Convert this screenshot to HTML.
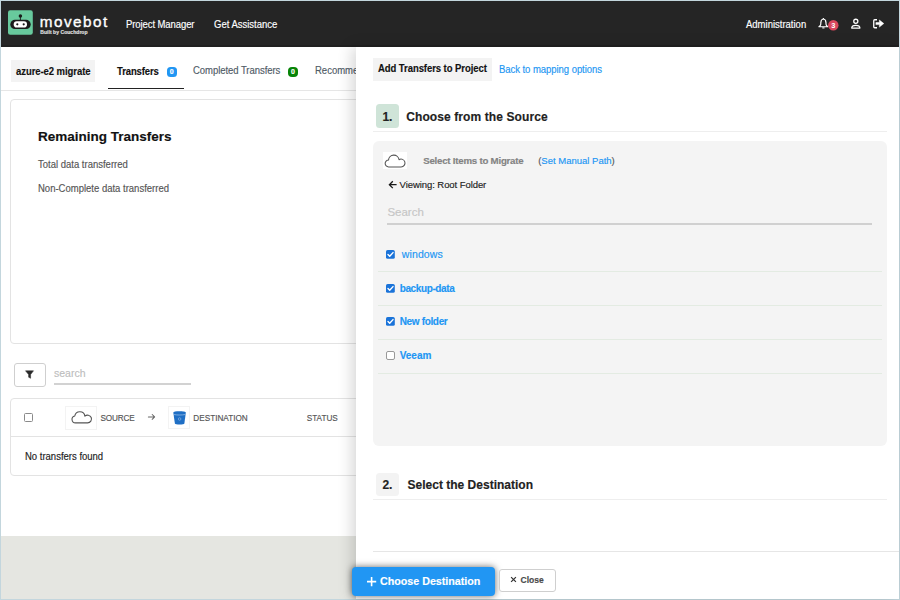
<!DOCTYPE html>
<html><head><meta charset="utf-8"><title>movebot</title>
<style>
html,body{margin:0;padding:0;}
body{width:900px;height:600px;position:relative;overflow:hidden;background:#c3d6dd;font-family:"Liberation Sans",sans-serif;}
.t{position:absolute;line-height:1;white-space:nowrap;-webkit-text-stroke:0.15px currentColor;}
.r{position:absolute;}
</style></head><body>
<div class="r" style="left:1.00px;top:47.00px;width:898.00px;height:552.00px;background:#fff;"></div>
<div class="r" style="left:1.00px;top:536.20px;width:355.00px;height:62.80px;background:#e5e6e1;"></div>
<div class="r" style="left:1.00px;top:1.00px;width:898.00px;height:45.70px;background:#252525;"></div>
<div class="r" style="left:1.00px;top:45.00px;width:898.00px;height:1.70px;background:#202020;"></div>
<svg class="r" style="left:0;top:0" width="40" height="40" viewBox="0 0 40 40">
<rect x="8" y="10.2" width="24.8" height="24.6" rx="2.2" fill="#68c99d"/>
<line x1="20.4" y1="16" x2="20.4" y2="21" stroke="#1b1b1b" stroke-width="0.9"/>
<circle cx="20.4" cy="16" r="1.75" fill="#1b1b1b"/>
<rect x="10.3" y="19.8" width="20.4" height="9.2" rx="4.6" fill="#1b1b1b"/>
<rect x="13.7" y="21.3" width="13.3" height="6.2" rx="3.1" fill="#fff"/>
<circle cx="17.3" cy="24.3" r="1.1" fill="#1b1b1b"/>
<circle cx="23.7" cy="24.3" r="1.1" fill="#1b1b1b"/>
</svg>
<div class="t" style="left:39.80px;top:13.95px;font-size:15.30px;color:#fff;letter-spacing:1.45px;-webkit-text-stroke:0.35px #fff;">movebot</div>
<div class="t" style="left:40.30px;top:29.87px;font-size:5.00px;color:#e0e0e0;font-weight:bold;letter-spacing:0.05px;">Built by Couchdrop</div>
<div class="t" style="left:126.40px;top:20.04px;font-size:10.00px;color:#fff;transform:scaleX(0.9500);transform-origin:0 0;letter-spacing:-0.09px;">Project Manager</div>
<div class="t" style="left:213.70px;top:20.04px;font-size:10.00px;color:#fff;transform:scaleX(0.9500);transform-origin:0 0;">Get Assistance</div>
<div class="t" style="left:746.20px;top:20.04px;font-size:10.00px;color:#fff;transform:scaleX(0.9500);transform-origin:0 0;">Administration</div>
<svg class="r" style="left:814px;top:14px" width="26" height="20" viewBox="0 0 26 20">
<path d="M9.4 5.0 C7.7 5.2 6.9 6.6 6.9 8.4 L6.7 10.6 C6.6 11.6 5.7 12.2 4.9 12.7 L13.9 12.7 C13.1 12.2 12.2 11.6 12.1 10.6 L11.9 8.4 C11.9 6.6 11.1 5.2 9.4 5.0 Z" fill="none" stroke="#fff" stroke-width="1.15" stroke-linejoin="round"/>
<line x1="9.4" y1="4.1" x2="9.4" y2="5.0" stroke="#fff" stroke-width="1.1"/>
<path d="M8.3 13.9 L10.5 13.9" stroke="#fff" stroke-width="1.1"/>
<circle cx="19.3" cy="11.3" r="5.2" fill="#d9485e"/>
<text x="19.35" y="13.9" font-family="Liberation Sans" font-weight="bold" font-size="7.4" fill="#fff" text-anchor="middle">3</text>
</svg>
<svg class="r" style="left:848px;top:16px" width="16" height="16" viewBox="0 0 16 16">
<circle cx="7.8" cy="5.3" r="2.05" fill="none" stroke="#fff" stroke-width="1.3"/>
<path d="M3.7 12.1 C3.7 10.1 5.3 9.3 7.8 9.3 C10.3 9.3 11.9 10.1 11.9 12.1 Z" fill="none" stroke="#fff" stroke-width="1.25" stroke-linejoin="round"/>
</svg>
<svg class="r" style="left:870px;top:16px" width="18" height="16" viewBox="0 0 18 16">
<path d="M7.0 3.75 L4.7 3.75 Q3.75 3.75 3.75 4.7 L3.75 10.8 Q3.75 11.75 4.7 11.75 L7.0 11.75" fill="none" stroke="#fff" stroke-width="1.3"/>
<path d="M5.9 6.5 L9.4 6.5 L9.4 4.0 L13.8 7.55 L9.4 11.1 L9.4 8.6 L5.9 8.6 Z" fill="#fff" stroke="#fff" stroke-width="0.5" stroke-linejoin="round"/>
</svg>
<div class="r" style="left:10.60px;top:59.80px;width:84.90px;height:22.20px;background:#f3f3f3;"></div>
<div class="t" style="left:15.60px;top:66.53px;font-size:10.00px;color:#111;font-weight:bold;transform:scaleX(0.9500);transform-origin:0 0;letter-spacing:-0.07px;">azure-e2 migrate</div>
<div class="t" style="left:117.20px;top:66.63px;font-size:10.00px;color:#111;font-weight:bold;transform:scaleX(0.9500);transform-origin:0 0;letter-spacing:-0.12px;">Transfers</div>
<div class="r" style="left:166.70px;top:67.00px;width:9.90px;height:9.80px;background:#2196f3;border-radius:3.5px;"></div>
<div class="t" style="left:169.70px;top:68.37px;font-size:7.00px;color:#fff;font-weight:bold;">0</div>
<div class="r" style="left:108.30px;top:88.00px;width:76.10px;height:1.40px;background:#222;"></div>
<div class="t" style="left:193.00px;top:66.43px;font-size:10.00px;color:#4f5b66;transform:scaleX(0.9500);transform-origin:0 0;letter-spacing:-0.05px;">Completed Transfers</div>
<div class="r" style="left:287.80px;top:66.80px;width:10.20px;height:9.90px;background:#078407;border-radius:4px;"></div>
<div class="t" style="left:291.00px;top:68.27px;font-size:7.00px;color:#fff;font-weight:bold;">0</div>
<div class="t" style="left:314.60px;top:66.43px;font-size:10.00px;color:#4f5b66;transform:scaleX(0.9500);transform-origin:0 0;">Recommendations</div>
<div class="r" style="left:1.00px;top:90.00px;width:355.00px;height:1.00px;background:#e6e6e6;"></div>
<div class="r" style="left:10.00px;top:99.00px;width:390.00px;height:244.50px;border:1px solid #e3e3e3;border-radius:4px;box-sizing:border-box;"></div>
<div class="t" style="left:38.00px;top:130.27px;font-size:13.50px;color:#111;font-weight:bold;">Remaining Transfers</div>
<div class="t" style="left:38.00px;top:159.74px;font-size:10.00px;color:#555;transform:scaleX(0.9500);transform-origin:0 0;">Total data transferred</div>
<div class="t" style="left:38.00px;top:184.34px;font-size:10.00px;color:#555;transform:scaleX(0.9500);transform-origin:0 0;">Non-Complete data transferred</div>
<div class="r" style="left:13.90px;top:363.20px;width:31.80px;height:24.00px;border:1px solid #cfcfcf;border-radius:3px;box-sizing:border-box;"></div>
<svg class="r" style="left:24px;top:369px" width="12" height="12" viewBox="0 0 12 12">
<path d="M1.5 1.8 L9.5 1.8 L6.6 5.6 L6.6 9.3 L4.6 8.2 L4.6 5.6 Z" fill="#2a2a2a" stroke="#2a2a2a" stroke-width="0.5" stroke-linejoin="round"/>
</svg>
<div class="t" style="left:54.00px;top:368.41px;font-size:10.50px;color:#bdbdbd;">search</div>
<div class="r" style="left:54.00px;top:383.20px;width:136.60px;height:1.50px;background:#d2d2d2;"></div>
<div class="r" style="left:10.00px;top:398.00px;width:390.00px;height:77.50px;border:1px solid #e3e3e3;border-radius:4px;box-sizing:border-box;"></div>
<div class="r" style="left:24.00px;top:413.40px;width:9.00px;height:8.60px;border:1px solid #8a8a8a;border-radius:1.5px;box-sizing:border-box;background:#fff;"></div>
<div class="r" style="left:65.30px;top:406.00px;width:32.20px;height:23.60px;border:1px solid #f3f3f3;box-sizing:border-box;"></div>
<svg class="r" style="left:70px;top:410px" width="24" height="16" viewBox="0 0 24 16">
<path d="M5.5 12.9 A3.5 3.5 0 0 1 4.77 5.98 A5.1 5.1 0 0 1 14.87 6.22 A3.9 3.9 0 1 1 17.6 12.9 Z" fill="none" stroke="#555" stroke-width="1.1" stroke-linejoin="round"/>
</svg>
<div class="t" style="left:100.40px;top:414.76px;font-size:8.20px;color:#555;letter-spacing:-0.15px;">SOURCE</div>
<svg class="r" style="left:146px;top:412px" width="12" height="10" viewBox="0 0 12 10">
<path d="M2.4 4.9 L8.6 4.9 M6.2 2.5 L8.6 4.9 L6.2 7.3" fill="none" stroke="#666" stroke-width="1.05" stroke-linecap="round" stroke-linejoin="round"/>
</svg>
<div class="r" style="left:167.80px;top:406.20px;width:22.60px;height:22.70px;border:1px solid #f3f3f3;box-sizing:border-box;"></div>
<svg class="r" style="left:166px;top:404px" width="26" height="26" viewBox="0 0 26 26">
<path d="M7.3 8.6 C7.3 7.6 10 7.2 13.5 7.2 C17 7.2 19.8 7.6 19.8 8.6 L18.4 19.4 C18.2 20.2 16.2 20.5 13.6 20.5 C11 20.5 9.1 20.2 8.9 19.4 Z" fill="#1f6fc5"/>
<path d="M7.9 10.5 C9.5 10.9 11.5 11 13.5 11 C15.5 11 17.5 10.9 19.2 10.5" fill="none" stroke="#b9d2ee" stroke-width="0.6"/>
<circle cx="13.6" cy="15" r="1.3" fill="none" stroke="#9fbfe6" stroke-width="0.55"/>
</svg>
<div class="t" style="left:193.30px;top:414.76px;font-size:8.20px;color:#555;">DESTINATION</div>
<div class="t" style="left:306.70px;top:414.76px;font-size:8.20px;color:#555;">STATUS</div>
<div class="r" style="left:10.00px;top:436.00px;width:390.00px;height:1.00px;background:#e3e3e3;"></div>
<div class="t" style="left:24.60px;top:452.14px;font-size:10.00px;color:#222;transform:scaleX(0.9500);transform-origin:0 0;">No transfers found</div>
<div class="r" style="left:356px;top:47px;width:543px;height:552px;background:#fff;box-shadow:-4px 0 14px rgba(0,0,0,0.16);"></div>
<div class="r" style="left:372.90px;top:58.00px;width:119.30px;height:22.80px;background:#f3f3f3;"></div>
<div class="t" style="left:378.00px;top:64.33px;font-size:10.00px;color:#111;font-weight:bold;transform:scaleX(0.9500);transform-origin:0 0;letter-spacing:-0.07px;">Add Transfers to Project</div>
<div class="t" style="left:499.00px;top:64.63px;font-size:10.00px;color:#2196f3;transform:scaleX(0.9500);transform-origin:0 0;letter-spacing:-0.05px;">Back to mapping options</div>
<div class="r" style="left:375.80px;top:104.20px;width:22.90px;height:23.50px;background:#cfe4d8;border-radius:3.5px;"></div>
<div class="t" style="left:382.40px;top:110.74px;font-size:12.00px;color:#222;font-weight:bold;">1.</div>
<div class="t" style="left:406.20px;top:110.74px;font-size:12.00px;color:#222;font-weight:bold;letter-spacing:0.1px;">Choose from the Source</div>
<div class="r" style="left:372.90px;top:131.00px;width:513.80px;height:1.00px;background:#eeeeee;"></div>
<div class="r" style="left:373.20px;top:140.90px;width:513.50px;height:304.90px;background:#f4f4f4;border-radius:6px;"></div>
<div class="r" style="left:383.10px;top:152.40px;width:23.70px;height:16.40px;background:#fff;"></div>
<svg class="r" style="left:383px;top:152px" width="24" height="17" viewBox="0 0 24 17">
<path d="M5.6 14.9 A3.4 3.4 0 0 1 5.51 8.1 A5.3 5.3 0 0 1 16.05 7.68 A3.9 3.9 0 1 1 18.1 14.9 Z" fill="none" stroke="#555" stroke-width="1.05" stroke-linejoin="round"/>
</svg>
<div class="t" style="left:423.20px;top:156.19px;font-size:9.70px;color:#838383;font-weight:bold;letter-spacing:-0.23px;">Select Items to Migrate</div>
<div class="t" style="left:538.20px;top:156.36px;font-size:9.50px;color:#555;">(<span style="color:#2196f3">Set Manual Path</span>)</div>
<svg class="r" style="left:386px;top:179px" width="14" height="12" viewBox="0 0 14 12">
<path d="M3.4 5.7 L10.6 5.7 M6.8 2.3 L3.4 5.7 L6.8 9.1" fill="none" stroke="#1a1a1a" stroke-width="1.3" stroke-linecap="butt" stroke-linejoin="miter"/>
</svg>
<div class="t" style="left:399.60px;top:180.26px;font-size:9.50px;color:#222;letter-spacing:-0.07px;">Viewing: Root Folder</div>
<div class="t" style="left:387.40px;top:207.37px;font-size:11.50px;color:#c6c6c6;">Search</div>
<div class="r" style="left:387.20px;top:223.00px;width:484.50px;height:1.50px;background:#d0d0d0;"></div>
<svg class="r" style="left:386.4px;top:249.7px" width="9" height="9" viewBox="0 0 9 9">
<rect x="0" y="0" width="8.8" height="8.8" rx="1.6" fill="#1a73d9"/>
<path d="M2 4.6 L3.7 6.3 L7 2.6" fill="none" stroke="#fff" stroke-width="1.4" stroke-linecap="round" stroke-linejoin="round"/>
</svg>
<div class="t" style="left:401.80px;top:249.41px;font-size:10.50px;color:#2196f3;letter-spacing:0.12px;">windows</div>
<svg class="r" style="left:386.4px;top:283.6px" width="9" height="9" viewBox="0 0 9 9">
<rect x="0" y="0" width="8.8" height="8.8" rx="1.6" fill="#1a73d9"/>
<path d="M2 4.6 L3.7 6.3 L7 2.6" fill="none" stroke="#fff" stroke-width="1.4" stroke-linecap="round" stroke-linejoin="round"/>
</svg>
<div class="t" style="left:399.70px;top:284.34px;font-size:10.00px;color:#2196f3;font-weight:bold;letter-spacing:-0.38px;">backup-data</div>
<svg class="r" style="left:386.4px;top:317.3px" width="9" height="9" viewBox="0 0 9 9">
<rect x="0" y="0" width="8.8" height="8.8" rx="1.6" fill="#1a73d9"/>
<path d="M2 4.6 L3.7 6.3 L7 2.6" fill="none" stroke="#fff" stroke-width="1.4" stroke-linecap="round" stroke-linejoin="round"/>
</svg>
<div class="t" style="left:399.70px;top:316.64px;font-size:10.00px;color:#2196f3;font-weight:bold;letter-spacing:-0.34px;">New folder</div>
<div class="r" style="left:386.40px;top:351.00px;width:8.80px;height:8.80px;border:1.2px solid #999;border-radius:2px;box-sizing:border-box;background:#fff;"></div>
<div class="t" style="left:399.70px;top:351.04px;font-size:10.00px;color:#2196f3;font-weight:bold;">Veeam</div>
<div class="r" style="left:377.60px;top:271.20px;width:504.10px;height:1.10px;background:#e3ebe2;"></div>
<div class="r" style="left:377.60px;top:304.80px;width:504.10px;height:1.10px;background:#e3ebe2;"></div>
<div class="r" style="left:377.60px;top:338.70px;width:504.10px;height:1.10px;background:#e3ebe2;"></div>
<div class="r" style="left:377.60px;top:372.50px;width:504.10px;height:1.10px;background:#e3ebe2;"></div>
<div class="r" style="left:375.60px;top:472.70px;width:23.30px;height:23.30px;background:#f3f3f3;border-radius:3.5px;"></div>
<div class="t" style="left:382.40px;top:479.44px;font-size:12.00px;color:#222;font-weight:bold;">2.</div>
<div class="t" style="left:407.60px;top:479.44px;font-size:12.00px;color:#222;font-weight:bold;">Select the Destination</div>
<div class="r" style="left:372.90px;top:499.00px;width:513.80px;height:1.00px;background:#eeeeee;"></div>
<div class="r" style="left:372.90px;top:551.00px;width:526.10px;height:1.00px;background:#e6e6e6;"></div>
<div class="r" style="left:351.80px;top:567.20px;width:142.80px;height:28.60px;background:#2196f3;border-radius:4px;box-shadow:0 0 7px rgba(0,0,0,0.6);"></div>
<svg class="r" style="left:366px;top:575.6px" width="12" height="12" viewBox="0 0 12 12">
<path d="M5.6 1 L5.6 10.2 M1 5.6 L10.2 5.6" stroke="#fff" stroke-width="1.6"/>
</svg>
<div class="t" style="left:380.00px;top:575.64px;font-size:10.70px;color:#fff;font-weight:bold;">Choose Destination</div>
<div class="r" style="left:499.00px;top:569.20px;width:56.80px;height:22.50px;background:#fff;border:1px solid #cfcfcf;border-radius:3px;box-sizing:border-box;"></div>
<svg class="r" style="left:509px;top:575px" width="9" height="9" viewBox="0 0 9 9">
<path d="M2.1 2.1 L6.9 6.9 M6.9 2.1 L2.1 6.9" stroke="#333" stroke-width="1.2"/>
</svg>
<div class="t" style="left:520.50px;top:576.00px;font-size:8.50px;color:#4a4a4a;font-weight:bold;">Close</div>
</body></html>
